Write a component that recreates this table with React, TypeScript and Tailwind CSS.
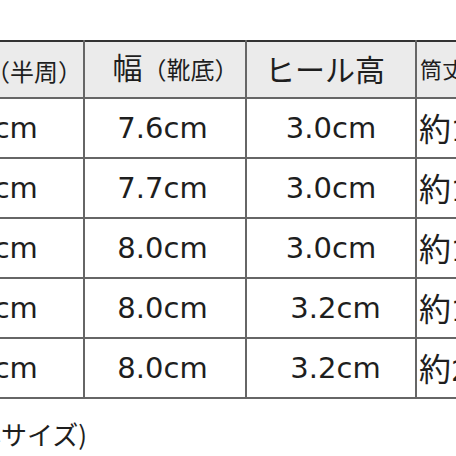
const rows = [
  { calf: '23.0cm', width: '7.6cm', heel: '3.0cm', shaft: '約18cm', heelShift: false },
  { calf: '23.5cm', width: '7.7cm', heel: '3.0cm', shaft: '約18cm', heelShift: false },
  { calf: '24.0cm', width: '8.0cm', heel: '3.0cm', shaft: '約19cm', heelShift: false },
  { calf: '24.5cm', width: '8.0cm', heel: '3.2cm', shaft: '約19cm', heelShift: true },
  { calf: '25.0cm', width: '8.0cm', heel: '3.2cm', shaft: '約20cm', heelShift: true },
];

const font = "font-['DejaVu_Sans','Noto_Sans_CJK_JP',sans-serif]";
const jp = "font-['Noto_Sans_CJK_JP',sans-serif]";

export default function App() {
  return (
    <div className={`w-[456px] h-[456px] overflow-hidden bg-white text-[#1e1e1e] ${font}`}>
      <div className="pt-[40px] -ml-[104px]">
        <table className="border-collapse table-fixed w-[760px]">
          <colgroup>
            <col className="w-[187px]" />
            <col className="w-[162px]" />
            <col className="w-[170px]" />
            <col className="w-[241px]" />
          </colgroup>
          <thead className={jp}>
            <tr className="h-[57px] bg-[#ebebeb] border-t-2 border-t-[#333]">
              <th className="border-x-2 border-b-2 border-[#666] p-0 pb-[4px] font-normal text-right pr-[1px] leading-none whitespace-nowrap">
                <span className="text-[30px]">足首</span>
                <span className="text-[24px]">（半周）</span>
              </th>
              <th className="border-x-2 border-b-2 border-[#666] p-0 pb-[4px] pl-[21px] font-normal whitespace-nowrap">
                <span className="text-[30px] leading-none">幅</span>
                <span className="text-[24px] leading-none">（靴底）</span>
              </th>
              <th className="border-x-2 border-b-2 border-[#666] p-0 pb-[4px] font-normal pr-[12px] text-[30px] leading-none whitespace-nowrap">
                ヒール高
              </th>
              <th className="border-x-2 border-b-2 border-[#666] p-0 pb-[4px] font-normal text-left pl-[3px] text-[22px] leading-none whitespace-nowrap">
                筒丈（履き口まで）
              </th>
            </tr>
          </thead>
          <tbody>
            {rows.map(r => (
              <tr key={r.calf} className="h-[60px]">
                <td className="border-2 border-[#666] p-0 pr-[14px] text-center text-[29px] leading-none whitespace-nowrap">{r.calf}</td>
                <td className="border-2 border-[#666] p-0 pr-[5px] text-center text-[29px] leading-none whitespace-nowrap">{r.width}</td>
                <td className="border-2 border-[#666] p-0 text-center text-[29px] leading-none whitespace-nowrap">
                  <span className={r.heelShift ? 'ml-[9px]' : ''}>{r.heel}</span>
                </td>
                <td className="border-2 border-[#666] p-0 text-left pl-[2px] text-[29px] leading-none whitespace-nowrap">
                  <span className={`${jp} text-[32px]`}>約</span>
                  {r.shaft.slice(1)}
                </td>
              </tr>
            ))}
          </tbody>
        </table>
      </div>
      <div className={`mt-[22px] w-[87px] flex justify-end whitespace-nowrap text-[26px] leading-none ${jp}`}>
        <span>（参考：日本サイズ)</span>
      </div>
    </div>
  );
}
